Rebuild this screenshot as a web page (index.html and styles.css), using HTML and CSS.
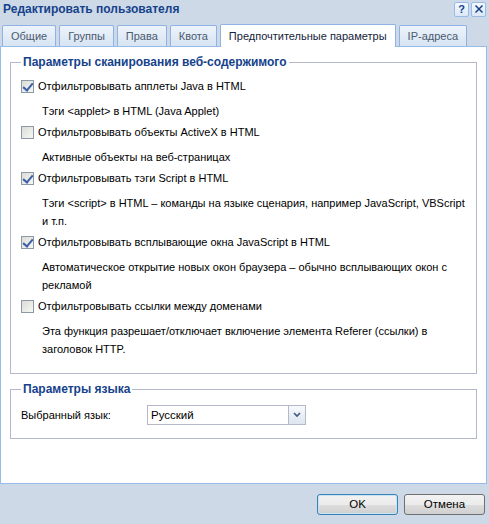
FILE: index.html
```html
<!DOCTYPE html>
<html lang="ru">
<head>
    <meta charset="UTF-8">
    <title>Редактировать пользователя</title>
    <link rel="stylesheet" href="styles.css">
</head>
<body>

<div class="window">
    <div class="titlebar">
        <span class="title">Редактировать пользователя</span>
        <div class="tools">
            <span class="tool">?</span>
            <span class="tool">
                <svg width="10" height="10" viewBox="0 0 10 10"><path d="M1.5 1.5L8.5 8.5M8.5 1.5L1.5 8.5" stroke="#15428b" stroke-width="1.5"/></svg>
            </span>
        </div>
    </div>

    <div class="tabs">
        <span class="tab">Общие</span>
        <span class="tab">Группы</span>
        <span class="tab">Права</span>
        <span class="tab">Квота</span>
        <span class="tab active">Предпочтительные параметры</span>
        <span class="tab">IP-адреса</span>
    </div>

    <div class="panel">
        <fieldset class="group">
            <legend>Параметры сканирования веб-содержимого</legend>

            <div class="option">
                <span class="check on"></span>
                <span>Отфильтровывать апплеты Java в HTML</span>
            </div>
            <p class="hint">Тэги &lt;applet&gt; в HTML (Java Applet)</p>

            <div class="option">
                <span class="check"></span>
                <span>Отфильтровывать объекты ActiveX в HTML</span>
            </div>
            <p class="hint">Активные объекты на веб-страницах</p>

            <div class="option">
                <span class="check on"></span>
                <span>Отфильтровывать тэги Script в HTML</span>
            </div>
            <p class="hint">Тэги &lt;script&gt; в HTML – команды на языке сценария, например JavaScript, VBScript и т.п.</p>

            <div class="option">
                <span class="check on"></span>
                <span>Отфильтровывать всплывающие окна JavaScript в HTML</span>
            </div>
            <p class="hint">Автоматическое открытие новых окон браузера – обычно всплывающих окон с рекламой</p>

            <div class="option">
                <span class="check"></span>
                <span>Отфильтровывать ссылки между доменами</span>
            </div>
            <p class="hint">Эта функция разрешает/отключает включение элемента Referer (ссылки) в заголовок HTTP.</p>
        </fieldset>

        <fieldset class="group lang">
            <legend>Параметры языка</legend>
            <div class="field">
                <label>Выбранный язык:</label>
                <div class="combo">
                    <span class="combo-value">Русский</span>
                    <span class="combo-btn">
                        <svg width="8" height="6" viewBox="0 0 8 6"><path d="M1 1L4 4L7 1" fill="none" stroke="#3d5a80" stroke-width="1.6"/></svg>
                    </span>
                </div>
            </div>
        </fieldset>
    </div>

    <div class="footer">
        <button class="btn default">OK</button>
        <button class="btn">Отмена</button>
    </div>
</div>

</body>
</html>
```

FILE: styles.css
```css
* {
    box-sizing: border-box;
}
body {
    margin: 0;
    background-color: #ced9e7;
    font-family: "Liberation Sans", Arial, sans-serif;
    font-size: 11px;
    color: #000;
}
.window {
    width: 489px;
    height: 524px;
    display: flex;
    flex-direction: column;
}
.titlebar {
    height: 23px;
    display: flex;
    align-items: center;
    justify-content: space-between;
    padding: 0 3px 5px 3px;
}
.title {
    font-weight: bold;
    font-size: 12px;
    color: #15428b;
}
.tools {
    display: flex;
    gap: 2px;
}
.tool {
    width: 15px;
    height: 15px;
    border: 1px solid #99bbe8;
    border-radius: 2px;
    background: linear-gradient(#f4f8fd, #dde8f5);
    color: #15428b;
    font-weight: bold;
    font-size: 11px;
    display: flex;
    align-items: center;
    justify-content: center;
}
.tabs {
    display: flex;
    align-items: flex-end;
    gap: 3px;
    padding-left: 2px;
    height: 23px;
}
.tab {
    height: 21px;
    line-height: 20px;
    padding: 0 8px;
    white-space: nowrap;
    border: 1px solid #8db2e3;
    border-bottom: none;
    border-radius: 2px 2px 0 0;
    background: linear-gradient(#edf3fb, #d7e4f3);
    color: #4a5a6e;
    font-size: 11px;
}
.tab.active {
    height: 23px;
    line-height: 22px;
    padding: 0 8px;
    background: #fff;
    color: #15223a;
    position: relative;
    top: 1px;
}
.panel {
    height: 438px;
    margin-right: 2px;
    background: #fff;
    border: 1px solid #99bbe8;
    padding: 8px 9px 0 9px;
}
.group {
    margin: 0;
    border: 1px solid #b5b8c8;
    padding: 5px 10px 15px 10px;
}
.group legend {
    font-weight: bold;
    font-size: 12px;
    color: #15428b;
    padding: 0 2px;
}
.option {
    display: flex;
    align-items: center;
    gap: 4px;
    height: 18px;
    margin-top: 3px;
}
.check {
    width: 13px;
    height: 13px;
    border: 1px solid #8c99a8;
    background: linear-gradient(135deg, #dcdcd6, #f6f6f4);
    position: relative;
}
.check.on::after {
    content: "";
    position: absolute;
    left: 3px;
    top: 0px;
    width: 4px;
    height: 8px;
    border: solid #3c5fa8;
    border-width: 0 2px 2px 0;
    transform: rotate(40deg);
}
.hint {
    margin: 7px 0 0 21px;
    line-height: 18px;
}
.lang {
    margin-top: 8px;
    padding: 2px 10px 13px 10px;
}
.field {
    display: flex;
    align-items: center;
    margin-top: 7px;
}
.field label {
    width: 126px;
}
.combo {
    width: 159px;
    height: 20px;
    border: 1px solid #b5b8c8;
    display: flex;
}
.combo-value {
    flex: 1;
    line-height: 18px;
    padding-left: 3px;
    font-size: 11.5px;
}
.combo-btn {
    width: 17px;
    border-left: 1px solid #b5b8c8;
    background: linear-gradient(#f7f9fc, #dde5ef);
    display: flex;
    align-items: center;
    justify-content: center;
}
.footer {
    flex: 1;
    display: flex;
    justify-content: flex-end;
    align-items: center;
    gap: 6px;
    padding-right: 4px;
}
.btn {
    width: 81px;
    height: 21px;
    font-family: "Liberation Sans", Arial, sans-serif;
    font-size: 11.5px;
    border: 1px solid #707070;
    border-radius: 3px;
    background: linear-gradient(#f2f2f2 0%, #ebebeb 50%, #dddddd 51%, #cfcfcf 100%);
}
.btn.default {
    border-color: #3c7fb1;
    box-shadow: inset 0 0 0 1px #c4e5f6;
}
```
